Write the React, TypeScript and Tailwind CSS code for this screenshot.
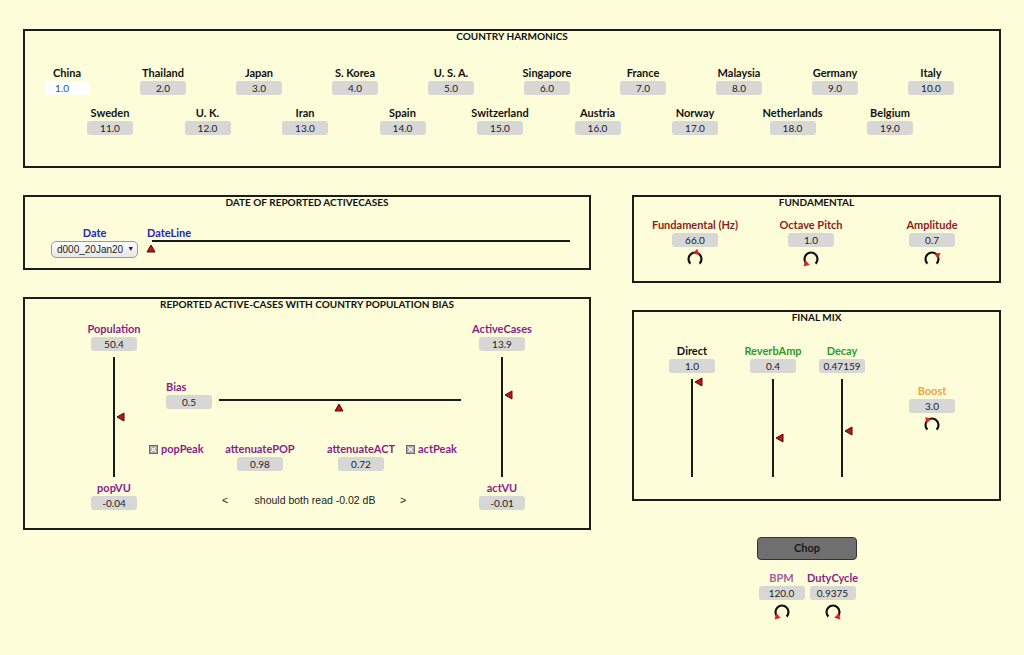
import React from 'react';

const row1 = [
  ['China', '1.0'],
  ['Thailand', '2.0'],
  ['Japan', '3.0'],
  ['S. Korea', '4.0'],
  ['U. S. A.', '5.0'],
  ['Singapore', '6.0'],
  ['France', '7.0'],
  ['Malaysia', '8.0'],
  ['Germany', '9.0'],
  ['Italy', '10.0'],
];

const row2 = [
  ['Sweden', '11.0'],
  ['U. K.', '12.0'],
  ['Iran', '13.0'],
  ['Spain', '14.0'],
  ['Switzerland', '15.0'],
  ['Austria', '16.0'],
  ['Norway', '17.0'],
  ['Netherlands', '18.0'],
  ['Belgium', '19.0'],
];

function Title({ children }: { children: React.ReactNode }) {
  return <p className="text-center text-[10px] font-bold leading-[10px] text-[#111]">{children}</p>;
}

function Box({ value, active }: { value: string; active?: boolean }) {
  if (active) {
    return (
      <div className="mt-px h-[14px] w-[44px] rounded-[2px] bg-white pl-[10px] text-left text-[10px] leading-[14px] text-[#1a4fb0]">
        {value}
      </div>
    );
  }
  return (
    <div className="mt-px h-[14px] w-[46px] rounded-[3px] bg-[#d7d7d5] text-center text-[10px] leading-[14px] text-[#222]">
      {value}
    </div>
  );
}

function Field({
  label,
  value,
  color = 'text-[#111]',
  width = 'w-[80px]',
  active,
}: {
  label: string;
  value: string;
  color?: string;
  width?: string;
  active?: boolean;
}) {
  return (
    <div className={`flex shrink-0 flex-col items-center ${width}`}>
      <span className={`whitespace-nowrap text-[11px] font-bold leading-[14px] ${color}`}>{label}</span>
      <Box value={value} active={active} />
    </div>
  );
}

// dial: open arc at the bottom, red arrowhead at the value
function Knob({ angle }: { angle: number }) {
  const c = 9;
  const r = 6.5;
  const rad = (angle * Math.PI) / 180;
  const ux = Math.sin(rad);
  const uy = -Math.cos(rad);
  const vx = -uy;
  const vy = ux;
  const tip = [c + ux * (r + 4), c + uy * (r + 4)];
  const b1 = [c + ux * (r - 1.5) + vx * 3.2, c + uy * (r - 1.5) + vy * 3.2];
  const b2 = [c + ux * (r - 1.5) - vx * 3.2, c + uy * (r - 1.5) - vy * 3.2];
  return (
    <svg width="18" height="18" viewBox="0 0 18 18" className="overflow-visible">
      <path d="M 4.4 13.6 A 6.5 6.5 0 1 1 13.6 13.6" fill="none" stroke="#111" strokeWidth="2.2" />
      <polygon points={`${tip[0]},${tip[1]} ${b1[0]},${b1[1]} ${b2[0]},${b2[1]}`} fill="#e31d27" />
    </svg>
  );
}

function LeftMarker() {
  return (
    <svg width="9" height="10" viewBox="0 0 9 10">
      <polygon points="1,5 8,1 8,9" fill="#c3141c" stroke="#4a0a0a" strokeWidth="1" />
    </svg>
  );
}

function UpMarker() {
  return (
    <svg width="10" height="9" viewBox="0 0 10 9">
      <polygon points="5,1 9,8 1,8" fill="#c3141c" stroke="#4a0a0a" strokeWidth="1" />
    </svg>
  );
}

function VSlider({ height, marker }: { height: string; marker: string }) {
  return (
    <div className={`relative mt-[6px] w-[2px] bg-[#1a1a1a] ${height}`}>
      <div className={`absolute left-[3px] ${marker}`}>
        <LeftMarker />
      </div>
    </div>
  );
}

function Check() {
  return (
    <svg width="9" height="9" viewBox="0 0 9 9" className="shrink-0">
      <rect x="0.5" y="0.5" width="8" height="8" fill="#a8a8a8" stroke="#6a6a6a" />
      <path d="M2.3 2.3 L6.7 6.7 M6.7 2.3 L2.3 6.7" stroke="#fff" strokeWidth="1.2" />
    </svg>
  );
}

const purple = 'text-[#8b1d8b]';

export default function App() {
  return (
    <div className="h-[655px] w-[1024px] overflow-hidden bg-[#fdfdd9] font-['Lato',sans-serif] text-[#111]">
      {/* country harmonics */}
      <section className="ml-[23px] mt-[29px] h-[139px] w-[978px] border-2 border-[#1c1c1c]">
        <Title>COUNTRY HARMONICS</Title>
        <div className="mt-[25px] flex gap-[16px] pl-[2px]">
          {row1.map(([n, v], i) => (
            <Field key={n} label={n} value={v} active={i === 0} />
          ))}
        </div>
        <div className="mt-[11px] flex gap-[17.5px] pl-[45px]">
          {row2.map(([n, v]) => (
            <Field key={n} label={n} value={v} />
          ))}
        </div>
      </section>

      <div className="ml-[23px] mt-[27px] flex items-start">
        {/* left column */}
        <div className="w-[568px]">
          <section className="h-[75px] border-2 border-[#1c1c1c]">
            <Title>DATE OF REPORTED ACTIVECASES</Title>
            <div className="mt-[19px] flex items-start">
              <div className="ml-[26px] flex w-[87px] flex-col items-center">
                <span className="text-[11px] font-bold leading-[14px] text-[#2323c8]">Date</span>
                <div className="mt-px flex h-[17px] w-[87px] items-center gap-[4px] rounded-[5px] border border-[#9a9a9a] bg-gradient-to-b from-white to-[#e6e6e6] pl-[5px] font-['Liberation_Sans',sans-serif] text-[10px] text-[#222]">
                  <span>d000_20Jan20</span>
                  <span className="text-[7px]">▼</span>
                </div>
              </div>
              <div className="ml-[9px] mr-[19px] flex flex-1 flex-col">
                <span className="text-[11px] font-bold leading-[14px] text-[#2323c8]">DateLine</span>
                <div className="relative ml-[5px] h-[2px] bg-[#1a1a1a]">
                  <div className="absolute -left-[6px] top-[4px]">
                    <UpMarker />
                  </div>
                </div>
              </div>
            </div>
          </section>

          <section className="mt-[27px] h-[233px] border-2 border-[#1c1c1c]">
            <Title>REPORTED ACTIVE-CASES WITH COUNTRY POPULATION BIAS</Title>
            <div className="mt-[13px] flex items-start">
              <div className="ml-[59px] flex w-[60px] flex-col items-center">
                <Field label="Population" value="50.4" color={purple} width="w-[60px]" />
                <VSlider height="h-[120px]" marker="top-[55px]" />
                <div className="mt-[4px]">
                  <Field label="popVU" value="-0.04" color={purple} width="w-[60px]" />
                </div>
              </div>

              <div className="w-[328px]">
                <div className="mt-[58px] flex items-start">
                  <div className="ml-[22px] flex flex-col items-start">
                    <span className={`text-[11px] font-bold leading-[14px] ${purple}`}>Bias</span>
                    <Box value="0.5" />
                  </div>
                  <div className="relative ml-[7px] mt-[19px] h-[2px] w-[242px] bg-[#1a1a1a]">
                    <div className="absolute left-[115px] top-[4px]">
                      <UpMarker />
                    </div>
                  </div>
                </div>

                <div className="mt-[33px] flex items-start">
                  <div className="ml-[5px] flex w-[60px] items-center gap-[3px]">
                    <Check />
                    <span className={`text-[11px] font-bold leading-[14px] ${purple}`}>popPeak</span>
                  </div>
                  <div className="ml-[11px]">
                    <Field label="attenuatePOP" value="0.98" color={purple} />
                  </div>
                  <div className="ml-[21px]">
                    <Field label="attenuateACT" value="0.72" color={purple} />
                  </div>
                  <div className="ml-[5px] flex items-center gap-[3px]">
                    <Check />
                    <span className={`text-[11px] font-bold leading-[14px] ${purple}`}>actPeak</span>
                  </div>
                </div>

                <div className="mt-[22px] flex font-['Liberation_Sans',sans-serif] text-[10.5px] leading-[14px] text-[#222]">
                  <span className="ml-[76px] w-[10px] text-center">&lt;</span>
                  <span className="w-[170px] text-center">should both read -0.02 dB</span>
                  <span className="w-[6px] text-center">&gt;</span>
                </div>
              </div>

              <div className="flex w-[60px] flex-col items-center">
                <Field label="ActiveCases" value="13.9" color={purple} width="w-[60px]" />
                <VSlider height="h-[120px]" marker="top-[33px]" />
                <div className="mt-[4px]">
                  <Field label="actVU" value="-0.01" color={purple} width="w-[60px]" />
                </div>
              </div>
            </div>
          </section>
        </div>

        {/* right column */}
        <div className="ml-[41px] w-[369px]">
          <section className="h-[88px] border-2 border-[#1c1c1c]">
            <Title>FUNDAMENTAL</Title>
            <div className="mt-[11px] flex items-start">
              <div className="ml-[11px] flex w-[100px] flex-col items-center">
                <Field label="Fundamental (Hz)" value="66.0" color="text-[#8e1b1b]" width="w-[100px]" />
                <div className="mt-[3px]">
                  <Knob angle={12} />
                </div>
              </div>
              <div className="ml-[16px] flex w-[100px] flex-col items-center">
                <Field label="Octave Pitch" value="1.0" color="text-[#8e1b1b]" width="w-[100px]" />
                <div className="mt-[3px]">
                  <Knob angle={-135} />
                </div>
              </div>
              <div className="ml-[21px] flex w-[100px] flex-col items-center">
                <Field label="Amplitude" value="0.7" color="text-[#8e1b1b]" width="w-[100px]" />
                <div className="mt-[3px]">
                  <Knob angle={55} />
                </div>
              </div>
            </div>
          </section>

          <section className="mt-[27px] h-[191px] border-2 border-[#1c1c1c]">
            <Title>FINAL MIX</Title>
            <div className="flex items-start">
              <div className="ml-[26px] mt-[22px] flex w-[64px] flex-col items-center">
                <Field label="Direct" value="1.0" width="w-[64px]" />
                <VSlider height="h-[98px]" marker="-top-[2px]" />
              </div>
              <div className="ml-[17px] mt-[22px] flex w-[64px] flex-col items-center">
                <Field label="ReverbAmp" value="0.4" color="text-[#2d9a2d]" width="w-[64px]" />
                <VSlider height="h-[98px]" marker="top-[54px]" />
              </div>
              <div className="ml-[5px] mt-[22px] flex w-[64px] flex-col items-center">
                <Field label="Decay" value="0.47159" color="text-[#2d9a2d]" width="w-[64px]" />
                <VSlider height="h-[98px]" marker="top-[47px]" />
              </div>
              <div className="ml-[26px] mt-[62px] flex w-[64px] flex-col items-center">
                <Field label="Boost" value="3.0" color="text-[#f4a43c]" width="w-[64px]" />
                <div className="mt-[3px]">
                  <Knob angle={-40} />
                </div>
              </div>
            </div>
          </section>

          <div className="ml-[125px] mt-[36px] flex w-[100px] flex-col items-center">
            <button className="h-[23px] w-[100px] rounded-[4px] border border-[#333] bg-[#6f6f6f] text-[11px] font-bold text-[#1a1a1a]">
              Chop
            </button>
            <div className="mt-[11px] flex gap-[3px]">
              <div className="flex w-[48px] flex-col items-center">
                <Field label="BPM" value="120.0" color="text-[#a25ea2]" width="w-[48px]" />
                <div className="mt-[3px]">
                  <Knob angle={-135} />
                </div>
              </div>
              <div className="flex w-[48px] flex-col items-center">
                <Field label="DutyCycle" value="0.9375" color={purple} width="w-[48px]" />
                <div className="mt-[3px]">
                  <Knob angle={135} />
                </div>
              </div>
            </div>
          </div>
        </div>
      </div>
    </div>
  );
}
